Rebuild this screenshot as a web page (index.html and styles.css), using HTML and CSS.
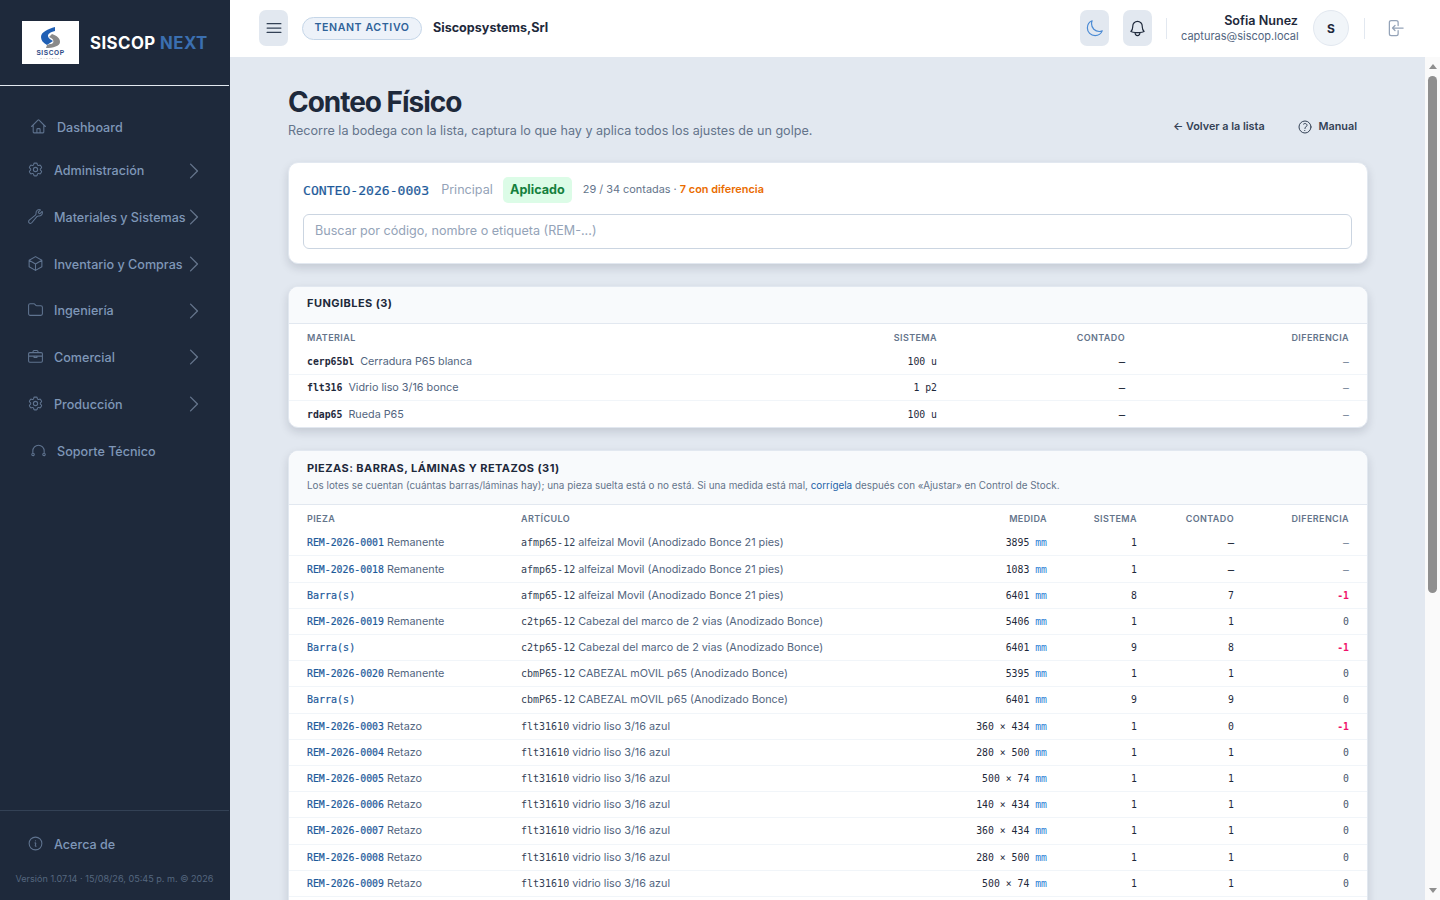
FILE: index.html
```html
<!DOCTYPE html>
<html lang="en">
<head>
    <meta charset="UTF-8">
    <meta name="viewport" content="width=device-width, initial-scale=1.0">
    <title>Conteo Físico</title>
    <link rel="stylesheet" href="styles.css">
</head>
<body>
    <aside class="sidebar">
        <div class="brand">
            <div class="brand-logo">
                <svg viewBox="0 0 57 43" width="57" height="43">
                    <path fill="#1f5fb4" d="M33 6V10C28 11 26 13 26 15C26 17 28 18 31 20L25 24C21 22 19 19 19 16C19 11 26 8 33 6Z"/>
                    <path fill="#8a8a8a" d="M30 13C35 15 38 17 38 21C38 25 31 27 24 27L25 24L28 23C31 23 32 21 31 19C31 18 29 17 27 16Z"/>
                    <text class="logo-name" x="28.500" y="34" text-anchor="middle">SISCOP</text>
                    <text class="logo-sub" x="28.500" y="38" text-anchor="middle">SYSTEMS</text>
                </svg>
            </div>
            <div class="brand-name">SISCOP <span>NEXT</span></div>
        </div>

        <nav class="nav">
            <a class="nav-link"><svg class="nav-icon" viewBox="0 0 24 24"><path d="M2.250 12l8.954-8.955c.44-.439 1.152-.439 1.591 0L21.750 12M4.500 9.750v10.125c0 .621.504 1.125 1.125 1.125H9.750v-4.875c0-.621.504-1.125 1.125-1.125h2.250c.621 0 1.125.504 1.125 1.125V21h4.125c.621 0 1.125-.504 1.125-1.125V9.750M8.250 21h8.250"/></svg>Dashboard</a>
            <a class="nav-group"><svg class="nav-icon" viewBox="0 0 24 24"><path d="M9.594 3.940c.09-.542.56-.94 1.110-.94h2.593c.55 0 1.020.398 1.110.94l.213 1.281c.063.374.313.686.645.87.074.04.147.083.22.127.324.196.72.257 1.075.124l1.217-.456a1.125 1.125 0 011.370.49l1.296 2.247a1.125 1.125 0 01-.26 1.431l-1.003.827c-.293.24-.438.613-.431.992a6.759 6.759 0 010 .255c-.007.378.138.75.43.99l1.005.828c.424.35.534.954.26 1.430l-1.298 2.247a1.125 1.125 0 01-1.369.491l-1.217-.456c-.355-.133-.75-.072-1.076.124a6.570 6.570 0 01-.22.128c-.331.183-.581.495-.644.869l-.213 1.280c-.09.543-.56.941-1.110.941h-2.594c-.55 0-1.020-.398-1.110-.94l-.213-1.281c-.062-.374-.312-.686-.644-.87a6.520 6.520 0 01-.22-.127c-.325-.196-.72-.257-1.076-.124l-1.217.456a1.125 1.125 0 01-1.369-.49l-1.297-2.247a1.125 1.125 0 01.26-1.431l1.004-.827c.292-.24.437-.613.43-.992a6.932 6.932 0 010-.255c.007-.378-.138-.75-.43-.99l-1.004-.828a1.125 1.125 0 01-.26-1.430l1.297-2.247a1.125 1.125 0 011.370-.491l1.216.456c.356.133.751.072 1.076-.124.072-.044.146-.087.22-.128.332-.183.582-.495.644-.869l.214-1.281zM15 12a3 3 0 11-6 0 3 3 0 016 0z"/></svg><span class="nav-text">Administración</span><svg class="chevron" viewBox="0 0 24 24"><path d="M8.250 4.500l7.500 7.500-7.500 7.500"/></svg></a>
            <a class="nav-group"><svg class="nav-icon" viewBox="0 0 24 24"><path d="M21.750 6.750a4.500 4.500 0 01-4.884 4.484c-1.076-.091-2.264.071-2.950.904l-7.152 8.684a2.548 2.548 0 11-3.586-3.586l8.684-7.152c.833-.686.995-1.874.904-2.950a4.500 4.500 0 016.336-4.486l-3.276 3.276a3.004 3.004 0 002.250 2.250l3.276-3.276c.256.565.398 1.192.398 1.852z"/></svg><span class="nav-text">Materiales y Sistemas</span><svg class="chevron" viewBox="0 0 24 24"><path d="M8.250 4.500l7.500 7.500-7.500 7.500"/></svg></a>
            <a class="nav-group"><svg class="nav-icon" viewBox="0 0 24 24"><path d="M21 7.500l-9-5.250L3 7.500m18 0l-9 5.250m9-5.250v9l-9 5.250M3 7.500l9 5.250M3 7.500v9l9 5.250m0-9v9"/></svg><span class="nav-text">Inventario y Compras</span><svg class="chevron" viewBox="0 0 24 24"><path d="M8.250 4.500l7.500 7.500-7.500 7.500"/></svg></a>
            <a class="nav-group"><svg class="nav-icon" viewBox="0 0 24 24"><path d="M2.250 6A2.250 2.250 0 014.500 3.750h4.880a1.500 1.500 0 011.060.44l2.120 2.120a1.500 1.500 0 001.060.44h5.880A2.250 2.250 0 0121.750 9v9a2.250 2.250 0 01-2.250 2.250h-15A2.250 2.250 0 012.250 18z"/></svg><span class="nav-text">Ingeniería</span><svg class="chevron" viewBox="0 0 24 24"><path d="M8.250 4.500l7.500 7.500-7.500 7.500"/></svg></a>
            <a class="nav-group"><svg class="nav-icon" viewBox="0 0 24 24"><path d="M8.500 6.500V5a1.500 1.500 0 011.500-1.500h4A1.500 1.500 0 0115.500 5v1.500M4 6.500h16a1.750 1.750 0 011.750 1.750v10A1.750 1.750 0 0120 20H4a1.750 1.750 0 01-1.750-1.750v-10A1.750 1.750 0 014 6.500zM2.250 11.500h19.500M10 11.500v2h4v-2"/></svg><span class="nav-text">Comercial</span><svg class="chevron" viewBox="0 0 24 24"><path d="M8.250 4.500l7.500 7.500-7.500 7.500"/></svg></a>
            <a class="nav-group"><svg class="nav-icon" viewBox="0 0 24 24"><path d="M9.594 3.940c.09-.542.56-.94 1.110-.94h2.593c.55 0 1.020.398 1.110.94l.213 1.281c.063.374.313.686.645.87.074.04.147.083.22.127.324.196.72.257 1.075.124l1.217-.456a1.125 1.125 0 011.370.49l1.296 2.247a1.125 1.125 0 01-.26 1.431l-1.003.827c-.293.24-.438.613-.431.992a6.759 6.759 0 010 .255c-.007.378.138.75.43.99l1.005.828c.424.35.534.954.26 1.430l-1.298 2.247a1.125 1.125 0 01-1.369.491l-1.217-.456c-.355-.133-.75-.072-1.076.124a6.570 6.570 0 01-.22.128c-.331.183-.581.495-.644.869l-.213 1.280c-.09.543-.56.941-1.110.941h-2.594c-.55 0-1.020-.398-1.110-.94l-.213-1.281c-.062-.374-.312-.686-.644-.87a6.520 6.520 0 01-.22-.127c-.325-.196-.72-.257-1.076-.124l-1.217.456a1.125 1.125 0 01-1.369-.49l-1.297-2.247a1.125 1.125 0 01.26-1.431l1.004-.827c.292-.24.437-.613.43-.992a6.932 6.932 0 010-.255c.007-.378-.138-.75-.43-.99l-1.004-.828a1.125 1.125 0 01-.26-1.430l1.297-2.247a1.125 1.125 0 011.370-.491l1.216.456c.356.133.751.072 1.076-.124.072-.044.146-.087.22-.128.332-.183.582-.495.644-.869l.214-1.281zM15 12a3 3 0 11-6 0 3 3 0 016 0z"/></svg><span class="nav-text">Producción</span><svg class="chevron" viewBox="0 0 24 24"><path d="M8.250 4.500l7.500 7.500-7.500 7.500"/></svg></a>
            <a class="nav-link nav-support"><svg class="nav-icon" viewBox="0 0 24 24"><path d="M4 16v-3.500a8 8 0 0116 0V16M2.500 17.500a1.750 1.750 0 113.500 0 1.750 1.750 0 11-3.500 0zM18 17.500a1.750 1.750 0 113.500 0 1.750 1.750 0 11-3.500 0z"/></svg>Soporte Técnico</a>
        </nav>

        <div class="sidebar-footer">
            <a class="nav-group nav-about"><svg class="nav-icon" viewBox="0 0 24 24"><path d="M11.250 11.250l.041-.02a.75.75 0 011.063.852l-.708 2.836a.75.75 0 001.063.853l.041-.021M21 12a9 9 0 11-18 0 9 9 0 0118 0zm-9-3.750h.008v.008H12V8.250z"/></svg><span class="nav-text">Acerca de</span></a>
            <div class="version">Versión 1.07.14 · 15/08/26, 05:45 p. m. © 2026</div>
        </div>
    </aside>

    <div class="page">
        <header class="topbar">
            <button class="icon-btn menu-btn"><svg viewBox="0 0 24 24" width="20" height="20"><path d="M3.750 6.750h16.500M3.750 12h16.500m-16.500 5.250h16.500"/></svg></button>
            <span class="tenant-pill">TENANT ACTIVO</span>
            <span class="tenant-name">Siscopsystems,Srl</span>

            <div class="topbar-right">
                <button class="icon-btn moon-btn"><svg viewBox="0 0 24 24" width="19" height="19"><path d="M21.752 15.002A9.718 9.718 0 0118 15.750c-5.385 0-9.750-4.365-9.750-9.750 0-1.330.266-2.597.748-3.752A9.753 9.753 0 003 11.250C3 16.635 7.365 21 12.750 21a9.753 9.753 0 009.002-5.998z"/></svg></button>
                <button class="icon-btn bell-btn"><svg viewBox="0 0 24 24" width="19" height="19"><path d="M14.857 17.082a23.848 23.848 0 005.454-1.310A8.967 8.967 0 0118 9.750v-.7V9A6 6 0 006 9v.75a8.967 8.967 0 01-2.312 6.022c1.733.64 3.560 1.085 5.455 1.310m5.714 0a24.255 24.255 0 01-5.714 0m5.714 0a3 3 0 11-5.714 0"/></svg></button>
                <span class="bar-divider"></span>
                <div class="user">
                    <div class="user-name">Sofia Nunez</div>
                    <div class="user-mail">capturas@siscop.local</div>
                </div>
                <div class="avatar">S</div>
                <span class="bar-divider"></span>
                <svg class="logout" viewBox="0 0 24 24" width="20" height="20"><path d="M15.750 9V5.250A2.250 2.250 0 0013.500 3h-6a2.250 2.250 0 00-2.250 2.250v13.500A2.250 2.250 0 007.500 21h6a2.250 2.250 0 002.250-2.250V15M12 9l-3 3m0 0l3 3m-3-3h12.750"/></svg>
            </div>
        </header>

        <div class="page-body">
            <main class="content">
                <div class="page-head">
                    <div>
                        <h1>Conteo Físico</h1>
                        <p>Recorre la bodega con la lista, captura lo que hay y aplica todos los ajustes de un golpe.</p>
                    </div>
                    <div class="page-actions">
                        <a>← Volver a la lista</a>
                        <a class="manual"><svg viewBox="0 0 24 24" width="16" height="16"><path d="M9.879 7.519c1.171-1.025 3.071-1.025 4.242 0 1.172 1.025 1.172 2.687 0 3.712-.203.179-.43.326-.67.442-.745.361-1.450.999-1.450 1.827v.75M21 12a9 9 0 11-18 0 9 9 0 0118 0zm-9 5.250h.008v.008H12v-.008z"/></svg>Manual</a>
                    </div>
                </div>

                <section class="card search-card">
                    <div class="count-info">
                        <span class="count-code">CONTEO-2026-0003</span>
                        <span class="count-place">Principal</span>
                        <span class="badge">Aplicado</span>
                        <span class="count-stats">29 / 34 contadas · <b>7 con diferencia</b></span>
                    </div>
                    <input class="search" type="text" placeholder="Buscar por código, nombre o etiqueta (REM-...)">
                </section>

                <section class="card">
                    <div class="card-head fungibles-head">
                        <h2>FUNGIBLES (3)</h2>
                    </div>
                    <table>
                        <colgroup><col style="width:500px"><col style="width:148px"><col style="width:188px"><col style="width:242px"></colgroup>
                        <thead>
                            <tr><th>MATERIAL</th><th class="num">SISTEMA</th><th class="num">CONTADO</th><th class="num">DIFERENCIA</th></tr>
                        </thead>
                        <tbody>
                            <tr><td><code class="item-code">cerp65bl</code><span class="gap">Cerradura P65 blanca</span></td><td class="num">100 u</td><td class="num dash">—</td><td class="num none">—</td></tr>
                            <tr><td><code class="item-code">flt316</code><span class="gap">Vidrio liso 3/16 bonce</span></td><td class="num">1 p2</td><td class="num dash">—</td><td class="num none">—</td></tr>
                            <tr><td><code class="item-code">rdap65</code><span class="gap">Rueda P65</span></td><td class="num">100 u</td><td class="num dash">—</td><td class="num none">—</td></tr>
                        </tbody>
                    </table>
                </section>

                <section class="card pieces-card">
                    <div class="card-head pieces-head">
                        <h2>PIEZAS: BARRAS, LÁMINAS Y RETAZOS (31)</h2>
                        <p>Los lotes se cuentan (cuántas barras/láminas hay); una pieza suelta está o no está. Si una medida está mal, <a>corrígela</a> después con «Ajustar» en Control de Stock.</p>
                    </div>
                    <table>
                        <colgroup><col style="width:232px"><col style="width:400px"><col style="width:126px"><col style="width:90px"><col style="width:97px"><col style="width:133px"></colgroup>
                        <thead>
                            <tr><th>PIEZA</th><th>ARTÍCULO</th><th class="num">MEDIDA</th><th class="num">SISTEMA</th><th class="num">CONTADO</th><th class="num">DIFERENCIA</th></tr>
                        </thead>
                        <tbody>
                            <tr><td><code class="rem">REM-2026-0001</code> <span>Remanente</span></td><td><code>afmp65-12</code> alfeizal Movil (Anodizado Bonce 21 pies)</td><td class="num">3895 <i>mm</i></td><td class="num">1</td><td class="num dash">—</td><td class="num none">—</td></tr>
                            <tr><td><code class="rem">REM-2026-0018</code> <span>Remanente</span></td><td><code>afmp65-12</code> alfeizal Movil (Anodizado Bonce 21 pies)</td><td class="num">1083 <i>mm</i></td><td class="num">1</td><td class="num dash">—</td><td class="num none">—</td></tr>
                            <tr><td><code class="lot">Barra(s)</code></td><td><code>afmp65-12</code> alfeizal Movil (Anodizado Bonce 21 pies)</td><td class="num">6401 <i>mm</i></td><td class="num">8</td><td class="num">7</td><td class="num minus">-1</td></tr>
                            <tr><td><code class="rem">REM-2026-0019</code> <span>Remanente</span></td><td><code>c2tp65-12</code> Cabezal del marco de 2 vias (Anodizado Bonce)</td><td class="num">5406 <i>mm</i></td><td class="num">1</td><td class="num">1</td><td class="num zero">0</td></tr>
                            <tr><td><code class="lot">Barra(s)</code></td><td><code>c2tp65-12</code> Cabezal del marco de 2 vias (Anodizado Bonce)</td><td class="num">6401 <i>mm</i></td><td class="num">9</td><td class="num">8</td><td class="num minus">-1</td></tr>
                            <tr><td><code class="rem">REM-2026-0020</code> <span>Remanente</span></td><td><code>cbmP65-12</code> CABEZAL mOVIL p65 (Anodizado Bonce)</td><td class="num">5395 <i>mm</i></td><td class="num">1</td><td class="num">1</td><td class="num zero">0</td></tr>
                            <tr><td><code class="lot">Barra(s)</code></td><td><code>cbmP65-12</code> CABEZAL mOVIL p65 (Anodizado Bonce)</td><td class="num">6401 <i>mm</i></td><td class="num">9</td><td class="num">9</td><td class="num zero">0</td></tr>
                            <tr><td><code class="rem">REM-2026-0003</code> <span>Retazo</span></td><td><code>flt31610</code> vidrio liso 3/16 azul</td><td class="num">360 × 434 <i>mm</i></td><td class="num">1</td><td class="num">0</td><td class="num minus">-1</td></tr>
                            <tr><td><code class="rem">REM-2026-0004</code> <span>Retazo</span></td><td><code>flt31610</code> vidrio liso 3/16 azul</td><td class="num">280 × 500 <i>mm</i></td><td class="num">1</td><td class="num">1</td><td class="num zero">0</td></tr>
                            <tr><td><code class="rem">REM-2026-0005</code> <span>Retazo</span></td><td><code>flt31610</code> vidrio liso 3/16 azul</td><td class="num">500 × 74 <i>mm</i></td><td class="num">1</td><td class="num">1</td><td class="num zero">0</td></tr>
                            <tr><td><code class="rem">REM-2026-0006</code> <span>Retazo</span></td><td><code>flt31610</code> vidrio liso 3/16 azul</td><td class="num">140 × 434 <i>mm</i></td><td class="num">1</td><td class="num">1</td><td class="num zero">0</td></tr>
                            <tr><td><code class="rem">REM-2026-0007</code> <span>Retazo</span></td><td><code>flt31610</code> vidrio liso 3/16 azul</td><td class="num">360 × 434 <i>mm</i></td><td class="num">1</td><td class="num">1</td><td class="num zero">0</td></tr>
                            <tr><td><code class="rem">REM-2026-0008</code> <span>Retazo</span></td><td><code>flt31610</code> vidrio liso 3/16 azul</td><td class="num">280 × 500 <i>mm</i></td><td class="num">1</td><td class="num">1</td><td class="num zero">0</td></tr>
                            <tr><td><code class="rem">REM-2026-0009</code> <span>Retazo</span></td><td><code>flt31610</code> vidrio liso 3/16 azul</td><td class="num">500 × 74 <i>mm</i></td><td class="num">1</td><td class="num">1</td><td class="num zero">0</td></tr>
                        </tbody>
                    </table>
                </section>
            </main>

            <div class="scrollbar">
                <span class="scroll-up"></span>
                <span class="scroll-thumb"></span>
                <span class="scroll-down"></span>
            </div>
        </div>
    </div>
</body>
</html>
```

FILE: styles.css
```css
* {
    box-sizing: border-box;
}

body {
    margin: 0;
    height: 100vh;
    display: flex;
    overflow: hidden;
    background-color: #e2e8f0;
    color: #1e293b;
    font-family: 'Inter', sans-serif;
}

svg {
    fill: none;
    stroke: currentColor;
    stroke-width: 1.5;
    stroke-linecap: round;
    stroke-linejoin: round;
    flex-shrink: 0;
}

code {
    font-family: 'DejaVu Sans Mono', monospace;
}

/* sidebar */
.sidebar {
    width: 230px;
    flex-shrink: 0;
    display: flex;
    flex-direction: column;
    background-color: #1e293b;
    border-right: 1px solid #1e293b;
}

.brand {
    height: 86px;
    display: flex;
    align-items: center;
    gap: 11px;
    padding: 0 0 1px 22px;
    border-bottom: 1px solid #e2e8f0;
}

.brand-logo {
    width: 57px;
    height: 43px;
    background-color: #fff;
}

.brand-logo svg {
    stroke: none;
    display: block;
}

.logo-name {
    font-family: 'Liberation Sans', sans-serif;
    font-size: 6.500px;
    font-weight: 700;
    letter-spacing: .6px;
    fill: #2d4a86;
}

.logo-sub {
    font-family: 'Liberation Sans', sans-serif;
    font-size: 2.500px;
    letter-spacing: 1.200px;
    fill: #9a9a9a;
}

.brand-name {
    font-size: 16.800px;
    font-weight: 700;
    letter-spacing: .45px;
    color: #fff;
    padding-top: 1px;
}

.brand-name span {
    color: #3b6fb0;
}

.nav {
    flex: 1;
    padding-top: 22px;
}

.nav-link,
.nav-group {
    display: flex;
    align-items: center;
    font-size: 12.600px;
    font-weight: 500;
    color: #7f97b8;
    gap: 10px;
}

.nav-link {
    height: 39.300px;
    padding-left: 30px;
}

.nav-support {
    margin-top: 4px;
}

.nav-group {
    height: 46.700px;
    padding-left: 27px;
    padding-right: 30px;
}

.nav-text {
    flex: 1;
    min-width: 0;
    white-space: nowrap;
}

.nav-icon {
    width: 17px;
    height: 17px;
    color: #5f738f;
    margin-top: -2px;
}

.chevron {
    width: 22px;
    height: 22px;
    margin: 0 -6px 0 -10px;
    color: #64748b;
}

.sidebar-footer {
    height: 90px;
    border-top: 1px solid #334155;
}

.nav-about {
    margin-top: 10px;
}

.version {
    font-size: 9.100px;
    color: #55677f;
    text-align: center;
    margin-top: 5px;
    white-space: nowrap;
}

/* top bar */
.page {
    flex: 1;
    min-width: 0;
    display: flex;
    flex-direction: column;
}

.topbar {
    height: 57px;
    flex-shrink: 0;
    display: flex;
    align-items: center;
    background-color: #fff;
    padding: 0 29px 1px;
}

.icon-btn {
    width: 29px;
    height: 36px;
    padding: 0;
    border: none;
    border-radius: 7px;
    background-color: #e2e8f0;
    display: flex;
    align-items: center;
    justify-content: center;
}

.menu-btn {
    color: #334155;
}

.tenant-pill {
    margin-left: 14px;
    height: 23px;
    width: 120px;
    padding-bottom: 2px;
    display: flex;
    align-items: center;
    justify-content: center;
    border: 1px solid #c5d6e8;
    border-radius: 12px;
    background-color: #edf2f9;
    color: #2f6299;
    font-size: 10.600px;
    font-weight: 600;
    letter-spacing: .6px;
}

.tenant-name {
    margin-left: 11px;
    padding-bottom: 1px;
    font-size: 12.600px;
    font-weight: 700;
    color: #1e293b;
}

.topbar-right {
    margin-left: auto;
    display: flex;
    align-items: center;
    margin-right: -2px;
}

.moon-btn {
    color: #4a8ad4;
    margin-right: 14px;
}

.bell-btn {
    color: #1e293b;
}

.bar-divider {
    width: 1px;
    height: 21px;
    background-color: #e2e8f0;
    margin: 0 14px;
}

.user {
    width: 117px;
    text-align: right;
    margin-right: 15px;
}

.user-name {
    font-size: 12.600px;
    font-weight: 600;
    color: #1e293b;
    line-height: 16px;
}

.user-mail {
    font-size: 11px;
    color: #526580;
    line-height: 15px;
}

.avatar {
    width: 36px;
    height: 36px;
    margin-right: 1px;
    border-radius: 50%;
    border: 1px solid #e2e8f0;
    background-color: #f1f5f9;
    display: flex;
    align-items: center;
    justify-content: center;
    font-size: 12px;
    font-weight: 700;
}

.logout {
    color: #94a3b8;
    margin-left: 6px;
    margin-right: 8px;
}

/* content */
.page-body {
    flex: 1;
    min-height: 0;
    display: flex;
}

.content {
    flex: 1;
    min-width: 0;
    overflow: hidden;
    padding: 28px 57px 30px 58px;
    background-color: #e2e8f0;
}

.scrollbar {
    width: 15px;
    flex-shrink: 0;
    display: flex;
    flex-direction: column;
    align-items: center;
    background-color: #fafafa;
}

.scroll-thumb {
    width: 9px;
    height: 517px;
    margin: 7px 0 auto;
    border-radius: 5px;
    background-color: #8f8f8f;
}

.scroll-up,
.scroll-down {
    width: 0;
    height: 0;
    border-left: 4.500px solid transparent;
    border-right: 4.500px solid transparent;
}

.scroll-up {
    margin-top: 7px;
    border-bottom: 5px solid #8f8f8f;
}

.scroll-down {
    margin-bottom: 7px;
    border-top: 5px solid #8f8f8f;
}

.page-head {
    display: flex;
    justify-content: space-between;
    align-items: flex-end;
    margin-bottom: 21px;
}

h1 {
    margin: 0;
    font-size: 28px;
    line-height: 34px;
    font-weight: 700;
    letter-spacing: -1.030px;
    color: #1e293b;
}

.page-head p {
    margin: 2px 0 0;
    font-size: 12.600px;
    line-height: 20px;
    color: #64748b;
}

.page-actions {
    display: flex;
    gap: 32px;
    font-size: 10.800px;
    font-weight: 600;
    color: #334155;
    padding: 0 11px 4px 0;
    line-height: 20px;
}

.manual {
    display: flex;
    align-items: center;
    gap: 6px;
}

.card {
    background-color: #fff;
    border: 1px solid #e2e8f0;
    border-radius: 10px;
    box-shadow: 0 4px 10px rgba(15, 23, 42, .14);
    margin-bottom: 22px;
    overflow: hidden;
}

.search-card {
    padding: 14px 15px 14px 14px;
}

.count-info {
    display: flex;
    align-items: center;
    height: 26px;
    margin-bottom: 11px;
}

.count-code {
    font-family: 'DejaVu Sans Mono', monospace;
    font-size: 13.100px;
    color: #1d5a9a;
    -webkit-text-stroke: .2px #1d5a9a;
}

.count-place {
    margin-left: 12px;
    padding-bottom: 2px;
    font-size: 12.600px;
    color: #94a3b8;
}

.badge {
    margin-left: 10px;
    width: 69px;
    height: 26px;
    padding-bottom: 2px;
    display: flex;
    align-items: center;
    justify-content: center;
    border-radius: 5px;
    background-color: #dcfce7;
    color: #15803d;
    font-size: 12.600px;
    font-weight: 700;
}

.count-stats {
    margin-left: 11px;
    padding-bottom: 2px;
    font-size: 10.900px;
    color: #64748b;
}

.count-stats b {
    font-weight: 600;
    color: #ea6c00;
}

.search {
    display: block;
    width: 100%;
    height: 35px;
    padding: 0 11px 3px;
    border: 1px solid #cbd5e1;
    border-radius: 6px;
    font-family: 'Inter', sans-serif;
    font-size: 12.600px;
    outline: none;
}

.search::placeholder {
    color: #94a3b8;
}

.card-head {
    padding: 0 18px;
    display: flex;
    flex-direction: column;
    justify-content: center;
    background-color: #f8fafc;
    border-bottom: 1px solid #e2e8f0;
}

.fungibles-head {
    height: 37px;
    padding-bottom: 4px;
}

.pieces-head {
    height: 54px;
    padding-bottom: 2px;
}

.pieces-card {
    min-height: 893px;
}

.pieces-card tbody tr:last-child td {
    border-bottom: 1px solid #f1f5f9;
}

.card-head h2 {
    margin: 0;
    font-size: 11px;
    font-weight: 700;
    letter-spacing: .45px;
    color: #1e293b;
}

.card-head p {
    margin: 4px 0 0;
    font-size: 9.900px;
    line-height: 13px;
    color: #64748b;
}

.card-head p a {
    color: #2563a8;
}

table {
    width: 100%;
    table-layout: fixed;
    border-collapse: collapse;
}

th {
    height: 24.600px;
    padding: 2px 0 0;
    text-align: left;
    font-size: 9px;
    font-weight: 600;
    letter-spacing: .4px;
    color: #64748b;
}

td {
    height: 26.200px;
    padding: 0;
    font-size: 10.800px;
    color: #526580;
    white-space: nowrap;
    border-top: 1px solid #f1f5f9;
}

tbody tr:first-child td {
    border-top: none;
}

th:first-child,
td:first-child {
    padding-left: 18px;
}

th:last-child,
td:last-child {
    padding-right: 18px;
}

th.num {
    text-align: right;
}

td.num {
    text-align: right;
    font-family: 'DejaVu Sans Mono', monospace;
    font-size: 9.800px;
    color: #1e293b;
}

td.dash {
    color: #0f172a;
    -webkit-text-stroke: .3px #0f172a;
}

td.none {
    color: #64748b;
}

td.zero {
    color: #475569;
}

td.minus {
    color: #f0126a;
    font-weight: 700;
}

td i {
    font-style: normal;
    color: #2a7fd5;
}

td code {
    font-size: 10px;
    color: #334155;
}

td code.item-code {
    font-size: 9.800px;
    font-weight: 700;
    color: #1e293b;
}

.gap {
    margin-left: 6px;
}

td code.rem {
    font-size: 9.840px;
    color: #1d5a9a;
    -webkit-text-stroke: .2px #1d5a9a;
}

td code.lot {
    color: #1d5a9a;
    -webkit-text-stroke: .2px #1d5a9a;
}
```
